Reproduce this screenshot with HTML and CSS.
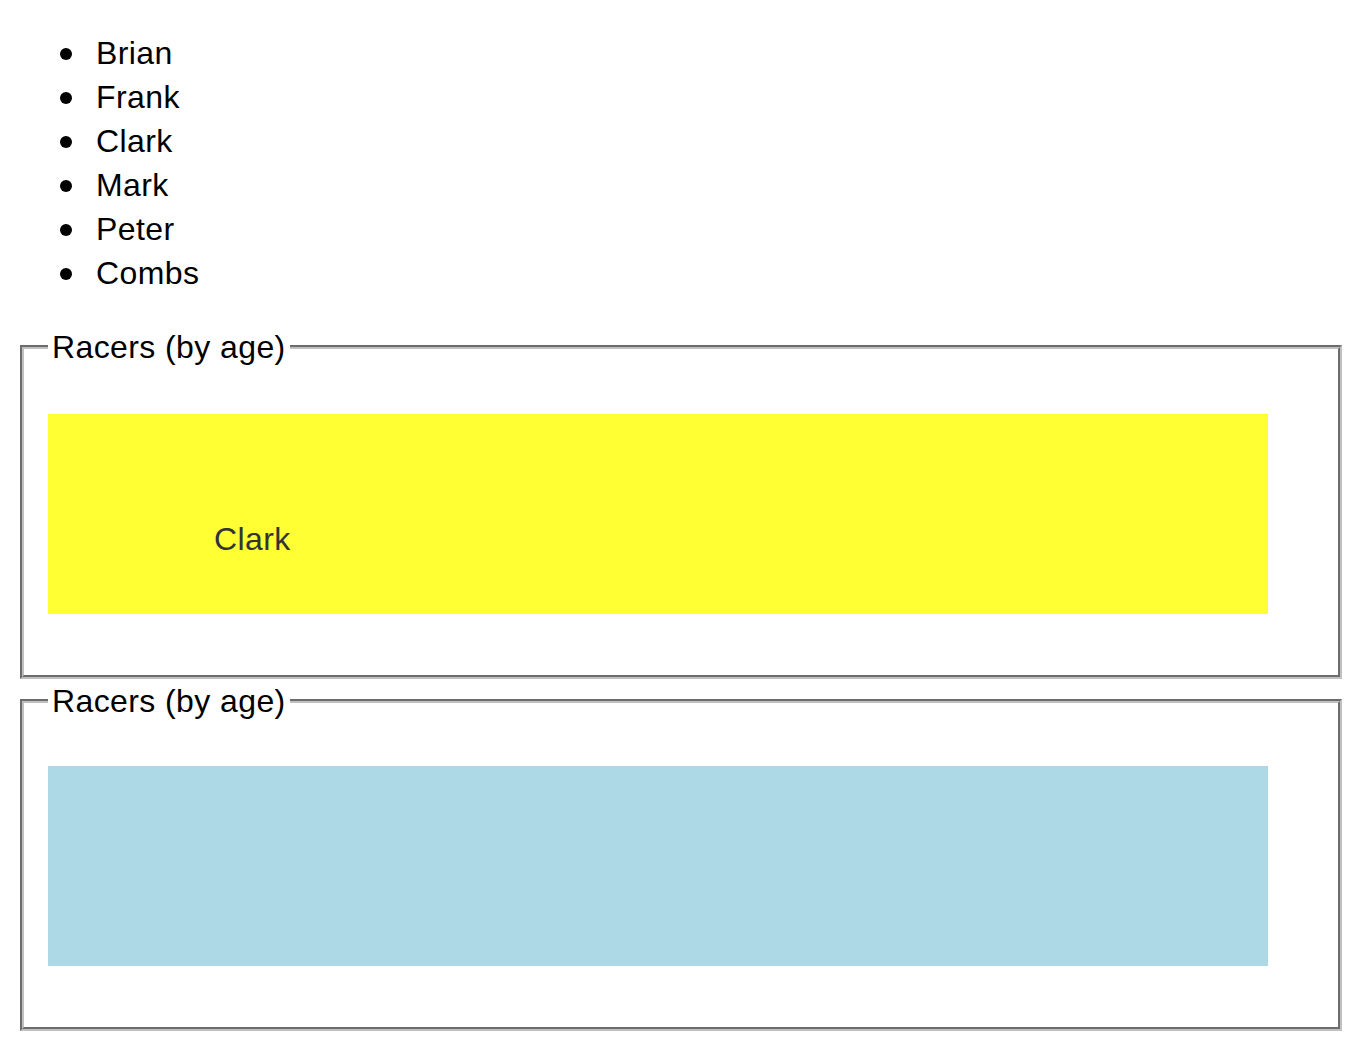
FILE: index.html
```html
<!DOCTYPE html>
<html>
<head>
<meta charset="utf-8">
<title>Racers</title>
<link rel="stylesheet" href="styles.css">
</head>
<body>
<ul class="names">
  <li class="name">Brian</li>
  <li class="name">Frank</li>
  <li class="name">Clark</li>
  <li class="name">Mark</li>
  <li class="name">Peter</li>
  <li class="name">Combs</li>
</ul>
<fieldset class="group">
  <legend class="group-title">Racers (by age)</legend>
  <div class="track track-yellow">
    <span class="racer">Clark</span>
  </div>
</fieldset>
<fieldset class="group">
  <legend class="group-title">Racers (by age)</legend>
  <div class="track track-blue"></div>
</fieldset>
</body>
</html>
```
FILE: styles.css
```css
html, body {
  background: #ffffff;
}
body {
  margin: 0 16px;
  font-family: "Liberation Sans", Helvetica, Arial, sans-serif;
  font-size: 32px;
  line-height: 44px;
  letter-spacing: 0.4px;
  color: #000000;
}
.names {
  margin: 31px 0 30px;
  padding-left: 80px;
  list-style: none;
}
.name::before {
  content: "";
  display: inline-block;
  width: 12px;
  height: 12px;
  margin-left: -36px;
  margin-right: 24px;
  border-radius: 50%;
  background: #000000;
  vertical-align: 4px;
}
.group {
  margin: 0 2px 0 4px;
  padding: 11px 24px 20px;
  border: 4px groove #c0c0c0;
}
.group-title {
  padding: 0 4px;
  font-size: 32px;
  line-height: 44px;
}
.track {
  width: 1220px;
  height: 200px;
  box-sizing: border-box;
}
.track-yellow {
  margin: 34px 0 41px;
  padding: 103px 0 0 166px;
  background: #ffff33;
}
.track-blue {
  margin: 32px 0 41px;
  background: #add8e6;
}
.racer {
  display: inline-block;
  color: #333333;
  line-height: 44px;
}
```
